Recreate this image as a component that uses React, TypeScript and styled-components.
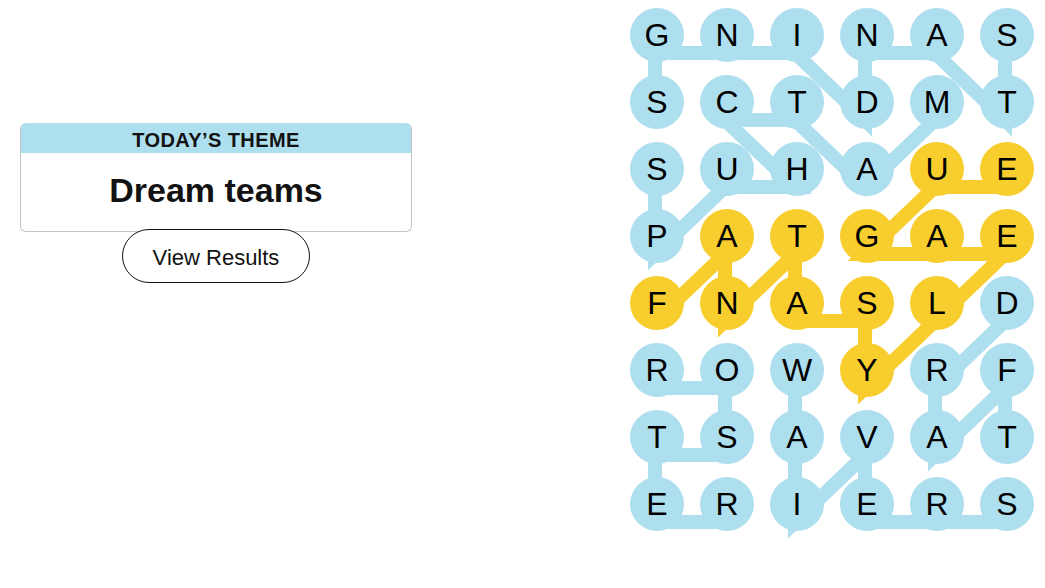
import { FC } from "react";
import styled, { createGlobalStyle } from "styled-components";

const GlobalStyle = createGlobalStyle`
  html, body {
    margin: 0;
    padding: 0;
    background: #ffffff;
  }
  body {
    font-family: "Liberation Sans", Arial, sans-serif;
    color: #000;
  }
`;

const BLUE = "#aedfee";
const YELLOW = "#f8cd2e";

const CELL = 54;
const COL_STEP = 70;
const ROW_STEP = 67;

const LETTERS = [
  "GNINAS",
  "SCTDMT",
  "SUHAUE",
  "PATGAE",
  "FNASLD",
  "ROWYRF",
  "TSAVAT",
  "ERIERS",
];

type Cell = [number, number];

const SPANGRAM: Cell[] = [
  [4, 0], [3, 1], [4, 1], [3, 2], [4, 2], [4, 3], [5, 3],
  [4, 4], [3, 5], [3, 4], [3, 3], [2, 4], [2, 5],
];

const WORDS: Cell[][] = [
  [[0, 5], [1, 5], [0, 4], [0, 3], [1, 3], [0, 2], [0, 1], [0, 0], [1, 0]],
  [[1, 4], [2, 3], [1, 2], [1, 1], [2, 2], [2, 1], [3, 0], [2, 0]],
  [[5, 0], [5, 1], [6, 1], [6, 0], [7, 0], [7, 1]],
  [[5, 2], [6, 2], [7, 2], [6, 3], [7, 3], [7, 4], [7, 5]],
  [[4, 5], [5, 4], [6, 4], [5, 5], [6, 5]],
];

const isSpangram = (r: number, c: number) =>
  SPANGRAM.some(([sr, sc]) => sr === r && sc === c);

// the connectors sit a little below the letters, as in the game
const toPoints = (cells: Cell[]) =>
  cells
    .map(([r, c]) => `${CELL / 2 + c * COL_STEP - 2},${CELL / 2 + r * ROW_STEP + 18}`)
    .join(" ");

const Page = styled.div`
  display: flex;
  justify-content: space-between;
  align-items: flex-start;
  height: 588px;
  padding: 8px 11px 0 20px;
  box-sizing: border-box;
  overflow: hidden;
`;

const Side = styled.div`
  width: 392px;
  padding-top: 115px;
  display: flex;
  flex-direction: column;
  align-items: center;
`;

const ThemeCard = styled.div`
  width: 100%;
  border: 1px solid #c4c4c4;
  border-top: none;
  border-radius: 6px;
  overflow: hidden;
  box-sizing: border-box;
`;

const ThemeHeader = styled.div`
  height: 30px;
  padding-top: 4px;
  box-sizing: border-box;
  background: ${BLUE};
  display: flex;
  align-items: center;
  justify-content: center;
  font-size: 20px;
  font-weight: 700;
  letter-spacing: 0.4px;
  color: #121212;
`;

const ThemeBody = styled.div`
  height: 78px;
  padding-bottom: 4px;
  box-sizing: border-box;
  display: flex;
  align-items: center;
  justify-content: center;
  font-size: 34px;
  font-weight: 700;
  color: #121212;
`;

const ResultsButton = styled.button`
  position: relative;
  margin-top: -3px;
  width: 188px;
  height: 54px;
  padding: 4px 0 0;
  border: 1px solid #121212;
  border-radius: 27px;
  background: #ffffff;
  font-family: "Liberation Sans", Arial, sans-serif;
  font-size: 22px;
  color: #121212;
  cursor: pointer;
`;

const Board = styled.div`
  position: relative;
  display: grid;
  grid-template-columns: repeat(6, ${CELL}px);
  grid-auto-rows: ${CELL}px;
  column-gap: ${COL_STEP - CELL}px;
  row-gap: ${ROW_STEP - CELL}px;
`;

const Lines = styled.svg`
  position: absolute;
  left: 0;
  top: 0;
  overflow: visible;
  z-index: 0;
`;

const Letter = styled.div<{ $found: boolean }>`
  position: relative;
  z-index: 1;
  width: ${CELL}px;
  height: ${CELL}px;
  border-radius: 50%;
  background: ${(p) => (p.$found ? YELLOW : BLUE)};
  display: flex;
  align-items: center;
  justify-content: center;
  font-size: 32px;
  color: #000;
`;

const App: FC = () => {
  const width = CELL * 6 + (COL_STEP - CELL) * 5;
  const height = CELL * 8 + (ROW_STEP - CELL) * 7;

  return (
    <>
      <GlobalStyle />
      <Page>
        <Side>
          <ThemeCard>
            <ThemeHeader>TODAY’S THEME</ThemeHeader>
            <ThemeBody>Dream teams</ThemeBody>
          </ThemeCard>
          <ResultsButton>View Results</ResultsButton>
        </Side>
        <Board>
          <Lines width={width} height={height}>
            {WORDS.map((w, i) => (
              <polyline
                key={i}
                points={toPoints(w)}
                fill="none"
                stroke={BLUE}
                strokeWidth={14}
                strokeLinejoin="miter"
              />
            ))}
            <polyline
              points={toPoints(SPANGRAM)}
              fill="none"
              stroke={YELLOW}
              strokeWidth={14}
              strokeLinejoin="miter"
            />
          </Lines>
          {LETTERS.map((row, r) =>
            row.split("").map((ch, c) => (
              <Letter key={`${r}-${c}`} $found={isSpangram(r, c)}>
                {ch}
              </Letter>
            ))
          )}
        </Board>
      </Page>
    </>
  );
};

export default App;
